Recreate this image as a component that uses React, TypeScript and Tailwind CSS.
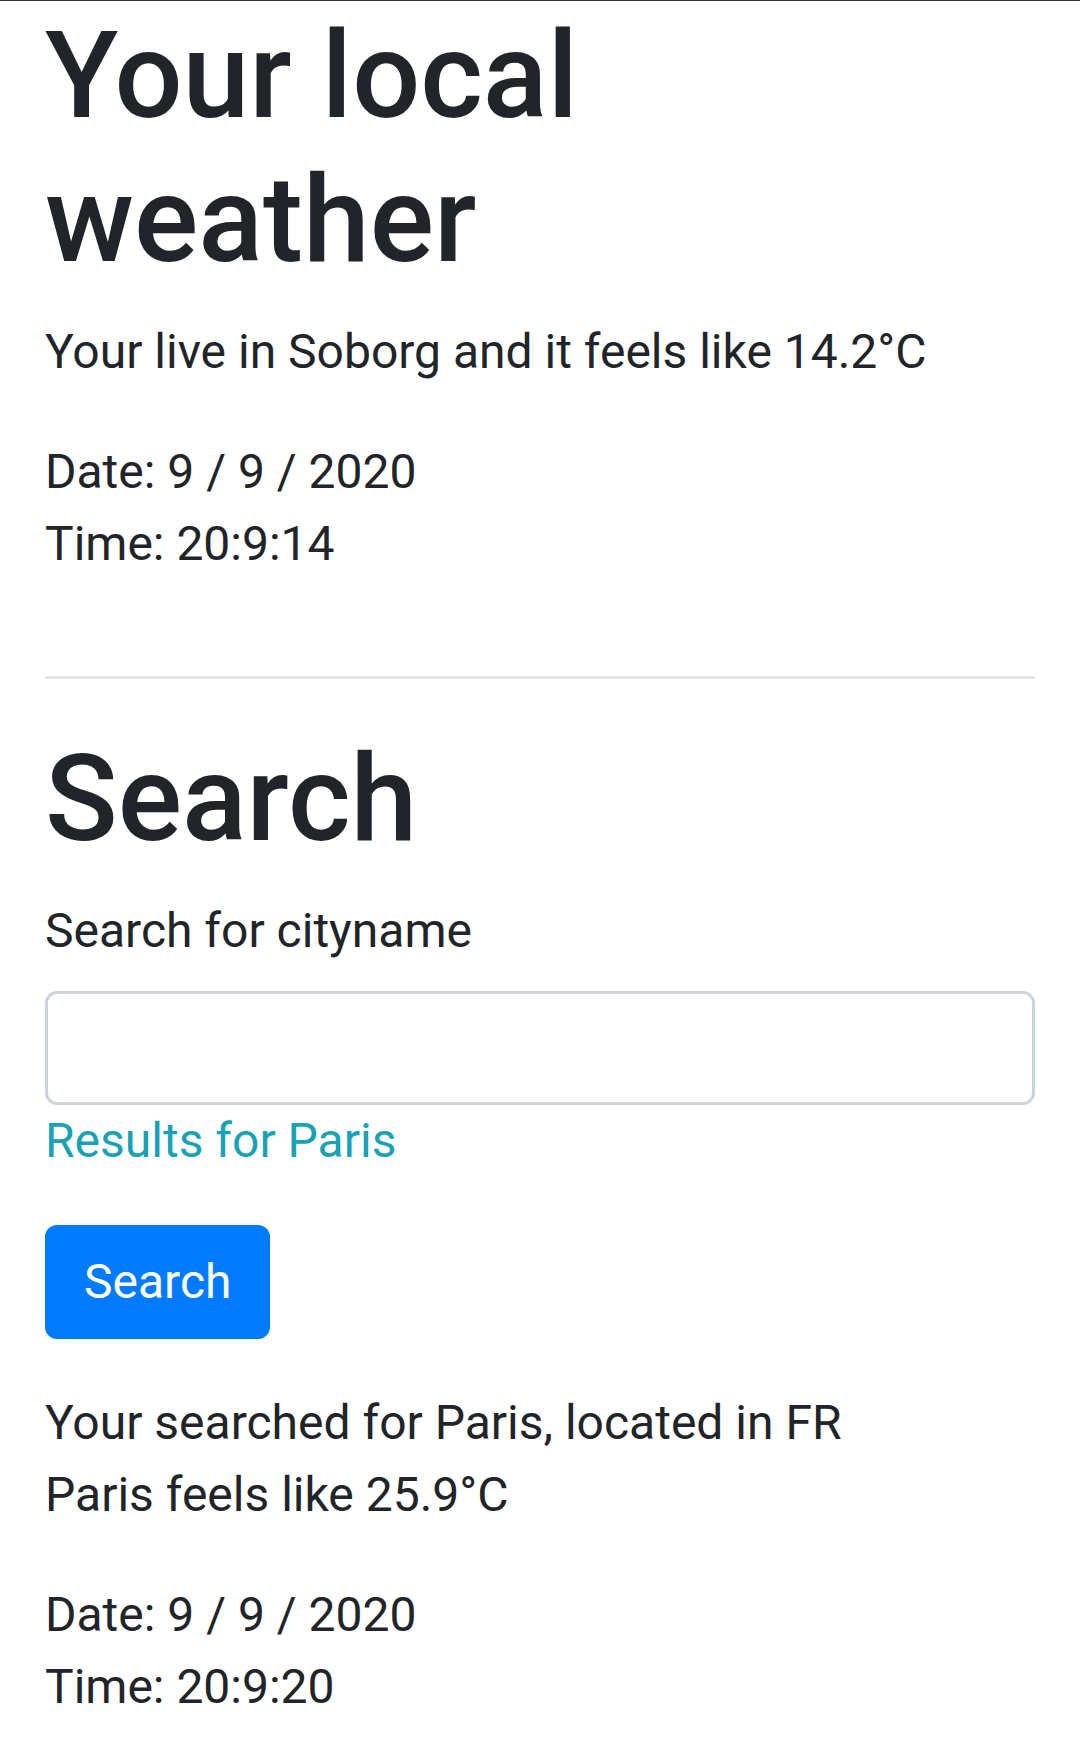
export default function App() {
  return (
    <div className="min-h-[1738px] bg-white border-t border-[#333333] text-[#212529] font-['Roboto','Liberation_Sans',sans-serif] text-[48px] leading-[72px]">
      <div className="px-[45px] pt-[3px]">
        <h1 className="text-[120px] leading-[144px] font-medium mb-[24px]">Your local weather</h1>
        <p className="mb-[48px]">Your live in Soborg and it feels like 14.2°C</p>
        <p className="mb-[96px]">
          Date: 9 / 9 / 2020
          <br />
          Time: 20:9:14
        </p>
        <hr className="mb-[48px] border-0 border-t-[3px] border-[rgba(0,0,0,0.1)]" />
        <h1 className="text-[120px] leading-[144px] font-medium mb-[24px]">Search</h1>
        <label className="block mb-[24px]">Search for cityname</label>
        <input
          type="text"
          className="block w-full h-[114px] px-[36px] border-[3px] border-[#ced4da] rounded-[12px] outline-none text-[48px]"
        />
        <p className="text-[#17a2b8] mb-[48px]">Results for Paris</p>
        <button className="bg-[#007bff] border-[3px] border-[#007bff] text-white rounded-[12px] px-[36px] py-[18px] leading-[72px] mb-[48px]">
          Search
        </button>
        <p className="mb-[48px]">
          Your searched for Paris, located in FR
          <br />
          Paris feels like 25.9°C
        </p>
        <p>
          Date: 9 / 9 / 2020
          <br />
          Time: 20:9:20
        </p>
      </div>
    </div>
  );
}
